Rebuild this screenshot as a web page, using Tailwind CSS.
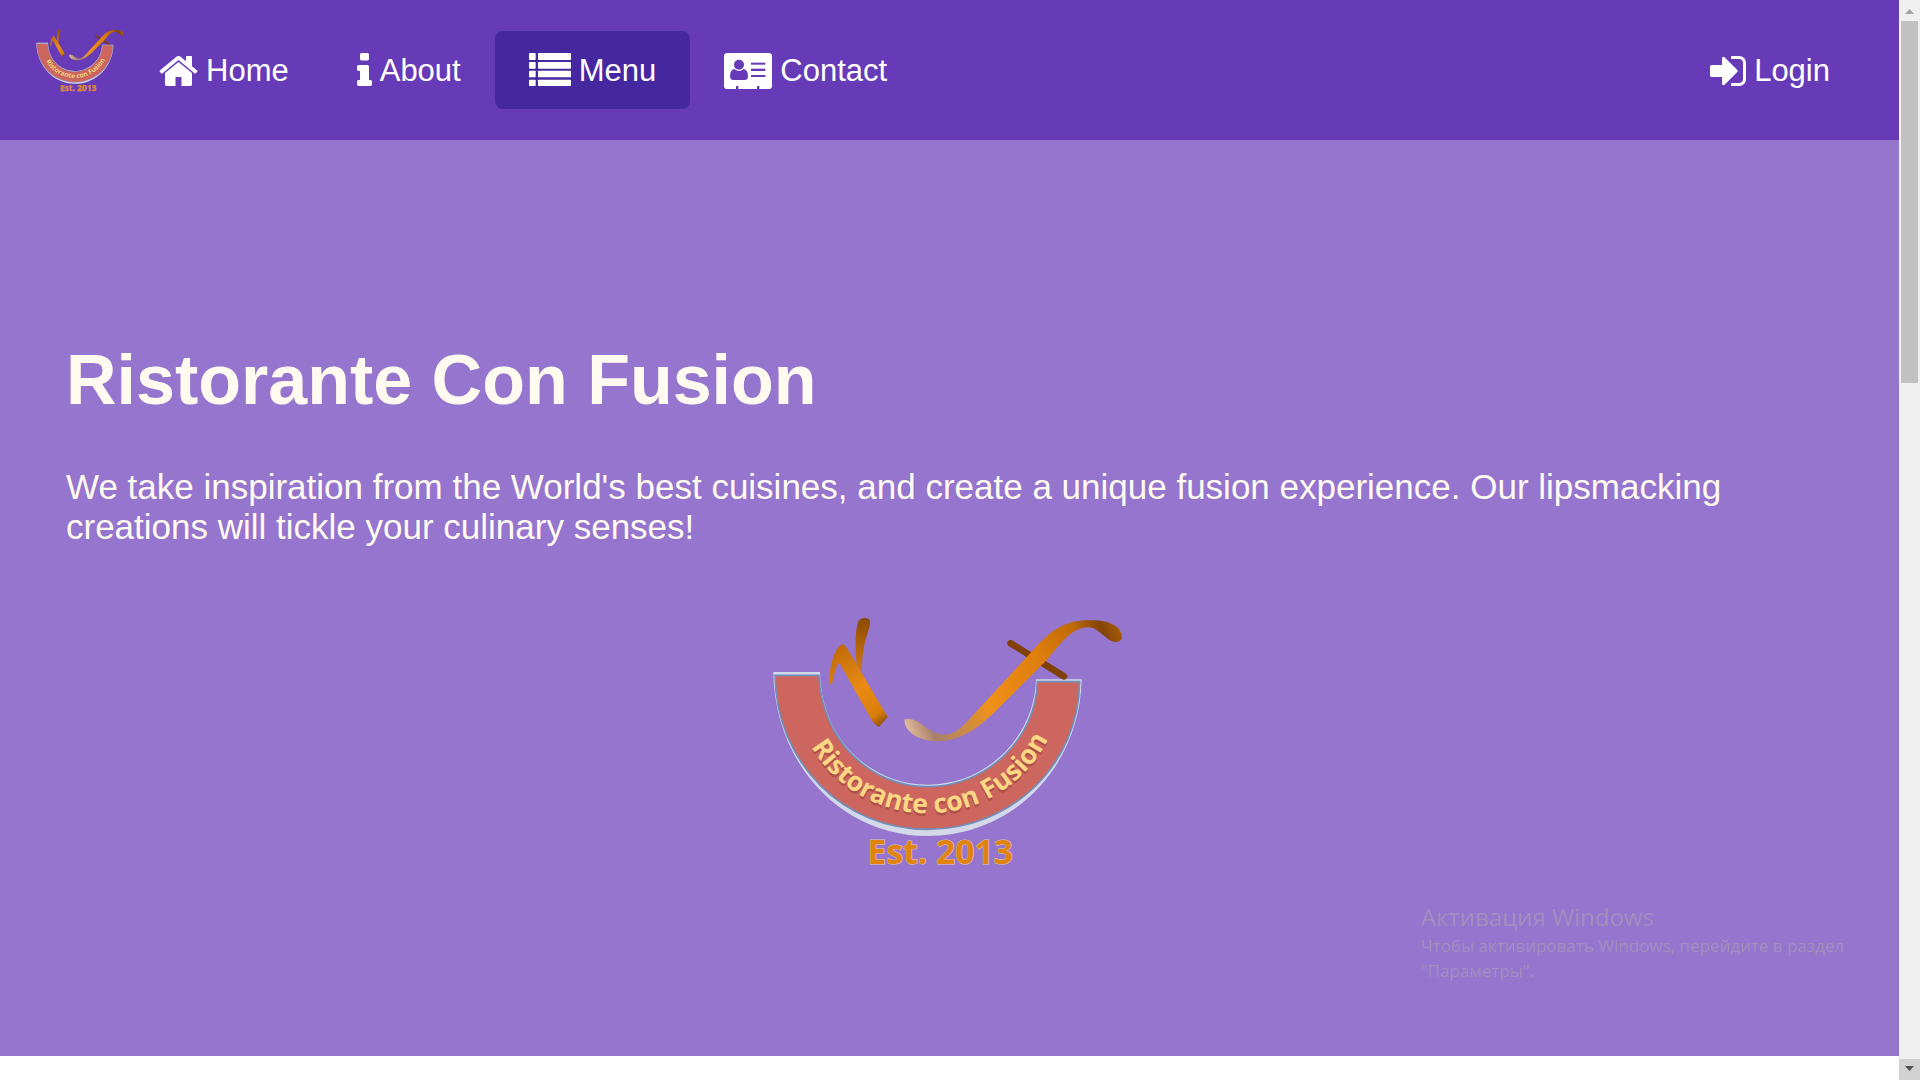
<!DOCTYPE html>
<html lang="en">
<head>
<meta charset="utf-8">
<meta name="viewport" content="width=device-width, initial-scale=1">
<title>Ristorante Con Fusion</title>
<script src="https://cdn.jsdelivr.net/npm/@tailwindcss/browser@4"></script>
</head>
<body class="flex min-h-screen items-start bg-white font-['Liberation_Sans',Arial,sans-serif]">

<!-- Shared logo artwork -->
<svg class="absolute size-0" aria-hidden="true">
  <defs>
    <linearGradient id="stem" gradientUnits="userSpaceOnUse" x1="290" y1="180" x2="440" y2="400">
      <stop offset="0" stop-color="#c26c08"/><stop offset=".5" stop-color="#ea8a14"/><stop offset=".85" stop-color="#d97d0c"/><stop offset="1" stop-color="#8a4a05"/>
    </linearGradient>
    <linearGradient id="branch" gradientUnits="userSpaceOnUse" x1="375" y1="85" x2="355" y2="230">
      <stop offset="0" stop-color="#8a4a05"/><stop offset="1" stop-color="#cf750c"/>
    </linearGradient>
    <linearGradient id="sweep" gradientUnits="userSpaceOnUse" x1="495" y1="410" x2="1145" y2="130">
      <stop offset="0" stop-color="#e2bd9c"/><stop offset=".1" stop-color="#a8806a"/><stop offset=".22" stop-color="#c98a4a"/><stop offset=".36" stop-color="#ef9118"/><stop offset=".65" stop-color="#dd7d0c"/><stop offset=".82" stop-color="#c06a06"/><stop offset=".93" stop-color="#824405"/><stop offset="1" stop-color="#a65c08"/>
    </linearGradient>
    <path id="arc" d="M158 265A405 405 0 0 0 968 265"/>
    <g id="logo">
      <path d="M100 246H240C242 440 385 584 563 584S884 440 888 268H1025C1020 530 820 738 563 738S104 525 100 246Z" fill="#d3d9e8"/>
      <path d="M105 256H237C244 445 385 590 563 590S888 445 892 275H1019C1016 525 815 718 563 718S108 520 105 256Z" fill="#cc665e" stroke="#6f8fbd" stroke-width="5"/>
      <path d="M350 225C345 170 345 120 356 92C364 80 388 82 390 94C390 130 366 145 366 245Z" fill="url(#branch)"/>
      <path d="M269 283C266 240 280 180 305 163C312 162 318 170 323 178L443 381L417 411C405 405 398 397 392 385L298 218C284 228 284 260 275 283Z" fill="url(#stem)"/>
      <path d="M812 160L972 259" fill="none" stroke="#803f05" stroke-width="20" stroke-linecap="round"/>
      <path d="M494 388C535 375 565 435 615 434C655 433 680 394 710 364L876 184C932 120 975 91 1045 91C1100 89 1147 105 1146 145C1138 160 1122 157 1108 150C1085 134 1068 110 1042 112C995 114 960 162 924 206L774 356C717 411 668 454 585 454C535 452 490 422 494 388Z" fill="url(#sweep)"/>
      <text fill="#6b1d14" fill-opacity=".3" font-family="Open Sans, sans-serif" font-weight="700" font-size="80" text-anchor="middle" transform="translate(0 8)"><textPath href="#arc" startOffset="51%">Ristorante con Fusion</textPath></text>
      <text fill="#fbd784" font-family="Open Sans, sans-serif" font-weight="700" font-size="80" text-anchor="middle"><textPath href="#arc" startOffset="51%">Ristorante con Fusion</textPath></text>
      <text x="601" y="823" fill="#e0840f" stroke="#e5c9b4" stroke-width="3" paint-order="stroke" font-family="Open Sans, sans-serif" font-weight="700" font-size="101" text-anchor="middle">Est. 2013</text>
    </g>
  </defs>
</svg>

<div class="min-w-0 flex-1">
  <header class="bg-[#673ab7] px-[35px] text-[31px] leading-9 text-white">
    <nav class="flex h-[140px] items-center" aria-label="Main">
      <a href="#" class="mt-7 self-start" aria-label="Ristorante Con Fusion">
        <svg class="h-[67px] w-[90px]" viewBox="84 68 1080 804" aria-hidden="true"><use href="#logo"/></svg>
      </a>
      <a href="#home" class="flex h-[78px] items-center gap-2 rounded-lg px-[34px] pt-[2px]">
        <svg class="h-[42px] w-[39px]" viewBox="64 0 1664 1792" fill="currentColor" aria-hidden="true"><path d="M1472 992v480q0 26-19 45t-45 19h-384v-384h-256v384h-384q-26 0-45-19t-19-45v-480q0-1 .5-3t.5-3l575-474 575 474q1 2 1 6zm223-69l-62 74q-8 9-21 11h-3q-13 0-21-7l-692-577-692 577q-12 8-24 7-13-2-21-11l-62-74q-8-10-7-23.500t11-21.500l719-599q32-26 76-26t76 26l244 204v-195q0-14 9-23t23-9h192q14 0 23 9t9 23v408l219 182q10 8 11 21.500t-7 23.500z"/></svg>
        Home
      </a>
      <a href="#about" class="flex h-[78px] items-center gap-2 rounded-lg px-[34px] pt-[2px]">
        <svg class="h-[42px] w-[15px]" viewBox="576 0 640 1792" fill="currentColor" aria-hidden="true"><path d="M1216 1344v128q0 26-19 45t-45 19h-512q-26 0-45-19t-19-45v-128q0-26 19-45t45-19h64v-384h-64q-26 0-45-19t-19-45v-128q0-26 19-45t45-19h384q26 0 45 19t19 45v576h64q26 0 45 19t19 45zm-128-1152v192q0 26-19 45t-45 19h-256q-26 0-45-19t-19-45v-192q0-26 19-45t45-19h256q26 0 45 19t19 45z"/></svg>
        About
      </a>
      <a href="#menu" aria-current="page" class="flex h-[78px] items-center gap-2 rounded-lg bg-[#4527a0] px-[34px] pt-[2px]">
        <svg class="h-[42px] w-[42px]" viewBox="0 -9 126 126" fill="currentColor" aria-hidden="true">
          <rect y="0" width="20" height="21" rx="2"/><rect x="27" y="0" width="99" height="21" rx="2"/>
          <rect y="27" width="20" height="20" rx="2"/><rect x="27" y="27" width="99" height="20" rx="2"/>
          <rect y="53" width="20" height="20" rx="2"/><rect x="27" y="53" width="99" height="20" rx="2"/>
          <rect y="80" width="20" height="19" rx="2"/><rect x="27" y="80" width="99" height="19" rx="2"/>
        </svg>
        Menu
      </a>
      <a href="#contact" class="flex h-[78px] items-center gap-2 rounded-lg px-[34px] pt-[2px]">
        <svg class="h-[42px] w-[48px]" viewBox="0 -9 144 126" aria-hidden="true">
          <path fill="currentColor" d="M10 0H134Q144 0 144 10V98Q144 108 134 108H106V99H99V108H43V99H36V108H10Q0 108 0 98V10Q0 0 10 0Z"/>
          <g fill="#673ab7"><path d="M31 48Q45 58 59 48Q72 50 72 70Q72 81 62 81H28Q18 81 18 70Q18 50 31 48Z"/><circle cx="45" cy="35" r="18" fill="#fff"/><circle cx="45" cy="35" r="15"/>
          <rect x="81" y="29" width="43" height="6"/><rect x="81" y="47" width="43" height="7"/><rect x="81" y="66" width="43" height="6"/></g>
        </svg>
        Contact
      </a>
      <a href="#login" class="ml-auto flex h-[78px] items-center gap-2 rounded-lg px-[34px] pt-[2px]">
        <svg class="h-[42px] w-[36px]" viewBox="128 0 1536 1792" fill="currentColor" aria-hidden="true"><path d="M1312 896q0 26-19 45l-544 544q-19 19-45 19t-45-19-19-45v-288h-448q-26 0-45-19t-19-45v-384q0-26 19-45t45-19h448v-288q0-26 19-45t45-19 45 19l544 544q19 19 19 45zm352-352v704q0 119-84.500 203.500t-203.500 84.500h-320q-13 0-22.500-9.500t-9.500-22.500q0-4-1-20t-.5-26.500 3-23.500 10-19.500 20.500-6.500h320q66 0 113-47t47-113v-704q0-66-47-113t-113-47h-312l-11.500-1-11.500-3-8-5.500-7-9-2-13.500q0-4-1-20t-.5-26.500 3-23.500 10-19.500 20.500-6.500h320q119 0 203.500 84.500t84.500 203.500z"/></svg>
        Login
      </a>
    </nav>
  </header>

  <main class="bg-[#9575cd] px-[66px] pt-[200px] pb-[166px] text-[#fffaf0]">
    <h1 class="text-[70px] leading-[80px] font-bold">Ristorante Con Fusion</h1>
    <p class="mt-[47px] text-[35px] leading-10">We take inspiration from the World's best cuisines, and create a unique fusion experience. Our lipsmacking creations will tickle your culinary senses!</p>
    <svg class="mx-auto mt-[43px] h-[300px] w-[420px]" viewBox="0 0 1260 900" role="img" aria-label="Ristorante con Fusion, established 2013"><use href="#logo"/></svg>
  </main>
</div>

<!-- Page scrollbar -->
<div class="sticky top-0 flex h-screen w-[21px] shrink-0 flex-col bg-[#f0f0f0]" aria-hidden="true">
  <svg class="h-[21px] w-[21px] shrink-0" viewBox="0 0 21 21"><path d="M6 14L10.500 9L15 14Z" fill="#a3a3a3"/></svg>
  <div class="mx-[2px] h-[362px] bg-[#c1c1c1]"></div>
  <svg class="mt-auto h-[21px] w-[21px] shrink-0 bg-[#d2d2d2]" viewBox="0 0 21 21"><path d="M6 7L10.500 12L15 7Z" fill="#505050"/></svg>
</div>

<!-- System activation notice, floating over the page -->
<aside lang="ru" class="pointer-events-none fixed right-[59px] bottom-[97px] w-[440px] font-['Open_Sans','Noto_Sans',sans-serif] text-[17px] leading-[25px] text-[#a28fbe]">
  <p class="text-[24px] leading-8">Активация Windows</p>
  <p>Чтобы активировать Windows, перейдите в раздел "Параметры".</p>
</aside>
</body>
</html>
